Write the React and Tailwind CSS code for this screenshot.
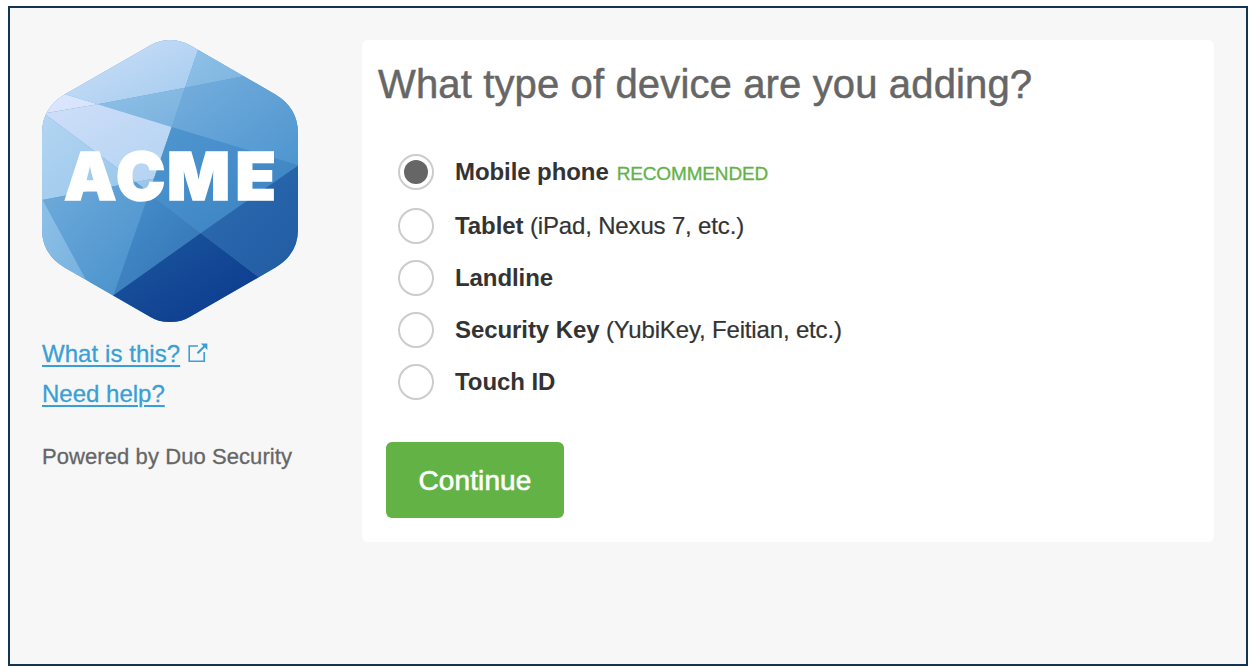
import { useState } from "react";

const devices = [
  { id: "mobile", name: "Mobile phone", tag: "RECOMMENDED" },
  { id: "tablet", name: "Tablet", hint: "(iPad, Nexus 7, etc.)" },
  { id: "landline", name: "Landline" },
  { id: "key", name: "Security Key", hint: "(YubiKey, Feitian, etc.)" },
  { id: "touch", name: "Touch ID" },
];

// each facet: points, start colour, end colour
const facets = [
  ["60,90 160,30 205,30 198.3,49.3 185,87.7 97.7,104.3 65,94.3", "#d3e3fa", "#a2caee"],
  ["198.3,49.3 205,30 260,73 243.3,76.3 185,87.7", "#93c5e9", "#7bb2df"],
  ["97.7,104.3 185,87.7 171.7,127", "#8fc1e6", "#79b1de"],
  ["185,87.7 243.3,76.3 300,65 300,166 171.7,127", "#79b0de", "#4d95cf"],
  ["40,88 65,94.3 97.7,104.3 45,113.3 40,114.5", "#dde7ff", "#d6e3fb"],
  ["44,113.5 97.7,104.3 171.7,127 154,178.5 136,182", "#cfdef9", "#b2d3f1"],
  ["40,110.5 45,114.3 136,182 40,200.5", "#b5d5f3", "#97c6e9"],
  ["136,182 154,178.5 149,193", "#a5cbec", "#8fbfe6"],
  ["42.7,200 136,182 149,193 145.7,201 113.3,295.3 110,300 85.3,278.7", "#6fabdb", "#458fcb"],
  ["40,195 42.7,200 85.3,278.7 85,300 40,300", "#8fc1e7", "#74b0de"],
  ["171.7,127 300,165.7 297.7,165.7 200.7,233 149,193", "#5097d1", "#3981c0"],
  ["149,193 200.7,233 113.3,295.3", "#4791cd", "#3371b2"],
  ["300,164 300,290 275,290 258.7,277 200.7,233", "#2d6bb0", "#215ba3"],
  ["113.3,295.3 200.7,233 258.7,277 275,290 170,340 105,301", "#1d5a9f", "#08328a"],
];

function Logo() {
  return (
    <svg width="256" height="282" viewBox="42 40 256 282" className="block">
      <defs>
        <clipPath id="hex">
          <path d="M150 45.500Q159 40 170 40Q181 40 190.500 45.500L275.500 94.500Q298 108 298 133V230Q298 254 275.500 267.500L190.500 316.500Q182 322 170 322Q158 322 149.500 316.500L64.500 267.500Q42 254 42 230V133Q42 108 64.500 94.500Z" />
        </clipPath>
        {facets.map(([, from, to], i) => (
          <linearGradient key={i} id={`f${i}`} x1="0" y1="0" x2="1" y2="1">
            <stop stopColor={from} />
            <stop offset="1" stopColor={to} />
          </linearGradient>
        ))}
      </defs>
      <g clipPath="url(#hex)">
        <rect x="42" y="40" width="256" height="282" fill="#5a9dd3" />
        {facets.map(([points], i) => (
          <polygon key={i} points={points} fill={`url(#f${i})`} />
        ))}
      </g>
      <text
        x="64 116 167 235.500"
        y="200"
        fill="#fff"
        stroke="#fff"
        strokeWidth="1.6"
        fontFamily="Inter, sans-serif"
        fontWeight="900"
        fontSize="66"
      >
        ACME
      </text>
    </svg>
  );
}

function ExternalIcon() {
  return (
    <svg width="20" height="20" viewBox="0 0 20 20" fill="none" stroke="#3a9fd6" strokeWidth="1.6" className="mb-0.5">
      <path d="M10 3H1.200V18.200H16.200V9" />
      <path d="M9.500 10.300L16.500 3.300" strokeWidth="2.2" />
      <path d="M12.800 0.400H19.400V7Z" fill="#3a9fd6" stroke="none" />
    </svg>
  );
}

export default function App() {
  const [selected, setSelected] = useState("mobile");

  return (
    <div className="h-[672px] bg-white px-2 pt-1.5 pr-3 font-['Liberation_Sans',Arial,sans-serif]">
      <div className="flex h-[660px] w-[1240px] items-start border-2 border-[#12364f] bg-[#f7f7f7] pt-8 pl-8">

        {/* SIDEBAR */}
        <aside className="w-80 shrink-0">
          <Logo />
          <div className="mt-3 flex h-10 items-center gap-2 text-2xl text-[#3a9fd6] [-webkit-text-stroke:0.3px]">
            <a href="#what" className="tracking-[0.06px] underline decoration-2 underline-offset-3">What is this?</a>
            <ExternalIcon />
          </div>
          <div className="flex h-10 items-center text-2xl text-[#3a9fd6] [-webkit-text-stroke:0.3px]">
            <a href="#help" className="underline decoration-2 underline-offset-3">Need help?</a>
          </div>
          <p className="mt-[25px] text-[22px] leading-9 tracking-[0.08px] text-[#666] [-webkit-text-stroke:0.3px]">Powered by Duo Security</p>
        </aside>

        {/* DEVICE FORM */}
        <main className="h-[502px] w-[852px] rounded-md bg-white px-4 pt-5">
          <h1 className="text-[40px] leading-12 tracking-[0.14px] text-[#666] [-webkit-text-stroke:0.5px]">What type of device are you adding?</h1>

          <div className="mt-[46px] ml-5">
            {devices.map((d) => (
              <label key={d.id} className="mb-4 flex h-9 items-center first:mb-[18px]">
                <input
                  type="radio"
                  name="device"
                  className="sr-only"
                  checked={selected === d.id}
                  onChange={() => setSelected(d.id)}
                />
                <span className="flex size-9 items-center justify-center rounded-full border-2 border-[#ccc]">
                  {selected === d.id && <span className="size-6 rounded-full bg-[#666]" />}
                </span>
                <span className="ml-[21px] text-2xl text-[#333]">
                  <b className="tracking-[-0.08px]">{d.name}</b>
                  {d.hint && <span className="tracking-[-0.16px] [-webkit-text-stroke:0.2px]"> {d.hint}</span>}
                  {d.tag && (
                    <span className="ml-2 text-[19px] tracking-[-0.15px] text-[#63b246] [-webkit-text-stroke:0.3px]">
                      {d.tag}
                    </span>
                  )}
                </span>
              </label>
            ))}
          </div>

          <button className="mt-[26px] ml-2 h-[76px] w-[178px] rounded-md bg-[#63b246] pt-px text-[28px] tracking-[0.1px] text-white [-webkit-text-stroke:0.6px]">
            Continue
          </button>
        </main>

      </div>
    </div>
  );
}
